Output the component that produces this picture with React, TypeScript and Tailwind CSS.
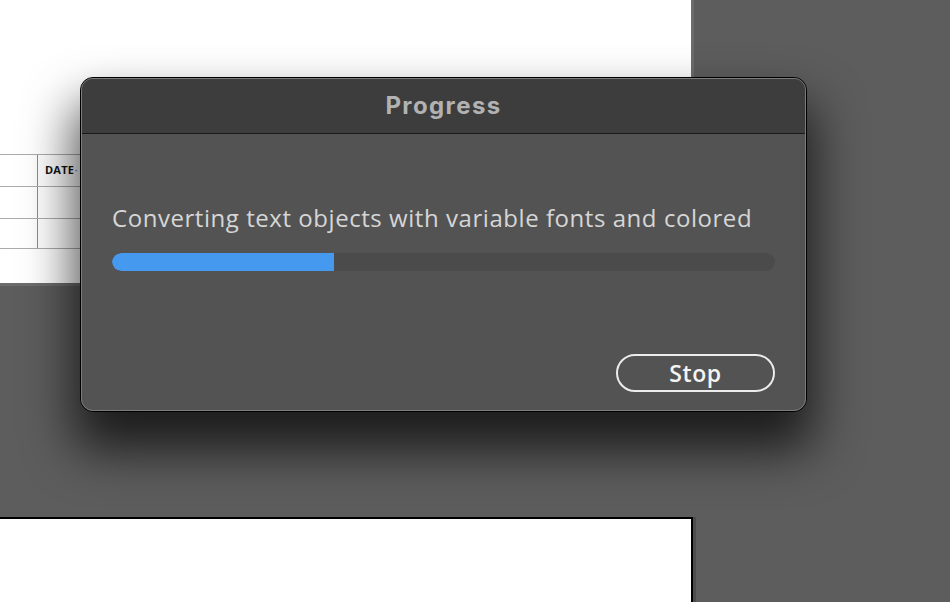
import React from "react";

function TopPage() {
  return (
    <div className="relative h-[286px] w-[694px] bg-white border-r-[3px] border-b-[3px] border-[#6c6c6c]">
      <div className="absolute left-0 right-0 top-[154px] h-[96px] flex flex-col">
        <div className="h-[33px] border-y border-[#ababab] flex">
          <div className="w-[38px] border-r border-[#8c8c8c]" />
          <div className="pl-[7px] flex items-center text-[11px] font-bold text-[#111] tracking-[0.2px]" style={{ fontFamily: '"Open Sans", sans-serif' }}>
            DATE<span className="text-[#3b6fd6] text-[8px] ml-[1px]">·</span>
          </div>
        </div>
        <div className="h-[32px] border-b border-[#ababab] flex">
          <div className="w-[38px] border-r border-[#8c8c8c]" />
        </div>
        <div className="h-[30px] border-b border-[#ababab] flex">
          <div className="w-[38px] border-r border-[#8c8c8c]" />
        </div>
      </div>
    </div>
  );
}

function ProgressDialog() {
  const progress = 33.5;
  return (
    <div className="absolute left-[80px] top-[77px] w-[727px] h-[335px] rounded-[13px] border border-black bg-[#535353] shadow-[0_32px_50px_6px_rgba(0,0,0,0.7)]">
      <div className="h-full rounded-[12px] border border-[#7c7c7c] overflow-hidden flex flex-col" style={{ fontFamily: '"Open Sans", sans-serif' }}>
        <div className="h-[55px] shrink-0 bg-[#3d3d3d] border-b border-[#1a1a1a] flex items-center justify-center pb-[1px]">
          <span className="text-[24px] font-bold text-[#b2b2b2] tracking-[1.4px]" style={{ fontFamily: 'Inter, sans-serif' }}>Progress</span>
        </div>
        <div className="flex-1 px-[30px] pt-[69px] flex flex-col">
          <p className="text-[24px] leading-[30px] tracking-[0.55px] text-[#d6d6d6] whitespace-nowrap">
            Converting text objects with variable fonts and colored
          </p>
          <div className="mt-[20px] h-[18px] rounded-full bg-[#4b4b4b] overflow-hidden">
            <div className="h-full bg-[#4599ef] rounded-l-full" style={{ width: `${progress}%` }} />
          </div>
          <div className="mt-[83px] flex justify-end">
            <button className="w-[159px] h-[38px] rounded-full border-2 border-[#ececec] text-[23px] font-semibold tracking-[0.6px] text-[#f4f4f4] flex items-center justify-center">
              Stop
            </button>
          </div>
        </div>
      </div>
    </div>
  );
}

export default function App() {
  return (
    <div className="relative w-[950px] h-[602px] overflow-hidden bg-[#5d5d5d]">
      <div className="flex flex-col">
        <TopPage />
        <div className="mt-[231px] h-[85px] w-[693px] bg-white border-t-2 border-r-2 border-black shadow-[3px_0_0_#4c4c4c]" />
      </div>
      <ProgressDialog />
    </div>
  );
}
